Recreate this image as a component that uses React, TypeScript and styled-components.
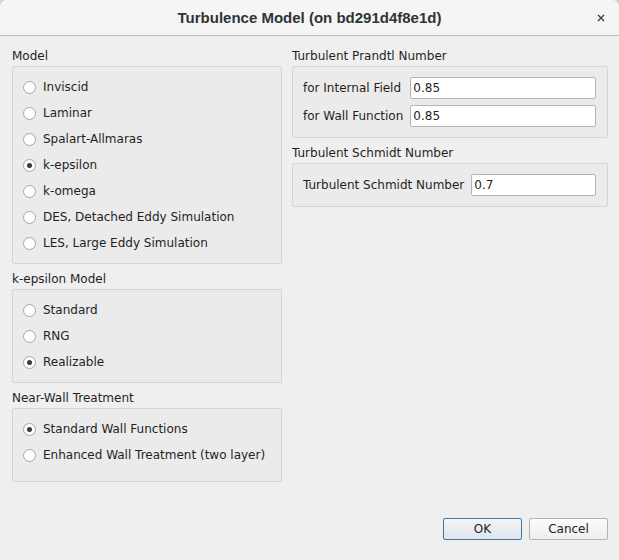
import React from "react";
import styled, { createGlobalStyle } from "styled-components";

const Global = createGlobalStyle`
  html, body { margin: 0; padding: 0; background: #d4d4d4; }
  body { font-family: "DejaVu Sans", sans-serif; font-size: 12px; color: #1f1f1f; }
  * { box-sizing: border-box; }
`;

const Window = styled.div`
  width: 619px;
  height: 560px;
  display: flex;
  flex-direction: column;
  background: #efefef;
  border-radius: 7px 7px 0 0;
  overflow: hidden;
`;

const TitleBar = styled.div`
  height: 36px;
  flex: none;
  display: flex;
  align-items: center;
  justify-content: center;
  position: relative;
  background: #f5f5f5;
  border-bottom: 1px solid #bcbcbc;
  font-family: "Liberation Sans", Arial, sans-serif;
  font-weight: 700;
  font-size: 15px;
  color: #2e3436;
`;

const CloseButton = styled.span`
  position: absolute;
  right: 13px;
  top: 13px;
  width: 10px;
  height: 10px;
  display: flex;
  align-items: center;
  justify-content: center;
`;

const Body = styled.div`
  flex: 1;
  display: flex;
  flex-direction: column;
  padding: 12px 11px 20px 12px;
`;

const Columns = styled.div`
  display: grid;
  grid-template-columns: 270px 316px;
  column-gap: 10px;
  align-items: start;
`;

const Column = styled.div`
  display: flex;
  flex-direction: column;
  gap: 7px;
`;

const Group = styled.div`
  display: flex;
  flex-direction: column;
`;

const GroupTitle = styled.div`
  height: 16px;
  line-height: 15px;
  padding-top: 1px;
  margin-bottom: 2px;
`;

const Box = styled.div<{ $extraBottom?: number }>`
  background: #ebebeb;
  border: 1px solid #d5d5d5;
  border-radius: 2px;
  padding: 7px 10px ${(p) => 7 + (p.$extraBottom ?? 0)}px 10px;
  display: flex;
  flex-direction: column;
`;

const FieldBox = styled.div`
  background: #ebebeb;
  border: 1px solid #d5d5d5;
  border-radius: 2px;
  padding: 10px 11px 10px 10px;
  display: grid;
  grid-template-columns: auto 1fr;
  column-gap: 7px;
  row-gap: 6px;
  align-items: center;
`;

const RadioRow = styled.label`
  height: 26px;
  display: flex;
  align-items: center;
  gap: 7px;
`;

const RadioCircle = styled.span<{ $checked?: boolean }>`
  width: 13px;
  height: 13px;
  flex: none;
  border-radius: 50%;
  border: 1px solid #a6a6a6;
  background: #ffffff;
  display: flex;
  align-items: center;
  justify-content: center;
  &::after {
    content: "";
    display: ${(p) => (p.$checked ? "block" : "none")};
    width: 5px;
    height: 5px;
    border-radius: 50%;
    background: #3a3a3a;
  }
`;

const FieldLabel = styled.span`
  white-space: nowrap;
`;

const Input = styled.div`
  height: 22px;
  background: #ffffff;
  border: 1px solid #b4b4b4;
  border-radius: 2px;
  padding: 0 2px;
  display: flex;
  align-items: center;
`;

const Footer = styled.div`
  margin-top: auto;
  display: flex;
  justify-content: flex-end;
  gap: 7px;
`;

const Button = styled.div<{ $default?: boolean }>`
  width: 79px;
  height: 22px;
  display: flex;
  align-items: center;
  justify-content: center;
  border-radius: 2px;
  border: 1px solid ${(p) => (p.$default ? "#3d78a8" : "#b3b3b3")};
  background: ${(p) =>
    p.$default
      ? "linear-gradient(#f3f4f6, #e0e4e9)"
      : "linear-gradient(#fbfbfb, #efefef)"};
  font-size: 12px;
  color: #1f1f1f;
`;

const Radio = ({ label, checked }: { label: string; checked?: boolean }) => (
  <RadioRow>
    <RadioCircle $checked={checked} />
    <span>{label}</span>
  </RadioRow>
);

export default function App() {
  return (
    <>
      <Global />
      <Window>
        <TitleBar>
          Turbulence Model (on bd291d4f8e1d)
          <CloseButton>
            <svg width="8" height="8" viewBox="0 0 8 8">
              <path d="M1 1L7 7M7 1L1 7" stroke="#3a3a3a" strokeWidth="1.3" />
            </svg>
          </CloseButton>
        </TitleBar>
        <Body>
          <Columns>
            <Column>
              <Group>
                <GroupTitle>Model</GroupTitle>
                <Box>
                  <Radio label="Inviscid" />
                  <Radio label="Laminar" />
                  <Radio label="Spalart-Allmaras" />
                  <Radio label="k-epsilon" checked />
                  <Radio label="k-omega" />
                  <Radio label="DES, Detached Eddy Simulation" />
                  <Radio label="LES, Large Eddy Simulation" />
                </Box>
              </Group>
              <Group>
                <GroupTitle>k-epsilon Model</GroupTitle>
                <Box>
                  <Radio label="Standard" />
                  <Radio label="RNG" />
                  <Radio label="Realizable" checked />
                </Box>
              </Group>
              <Group>
                <GroupTitle>Near-Wall Treatment</GroupTitle>
                <Box $extraBottom={6}>
                  <Radio label="Standard Wall Functions" checked />
                  <Radio label="Enhanced Wall Treatment (two layer)" />
                </Box>
              </Group>
            </Column>
            <Column>
              <Group>
                <GroupTitle>Turbulent Prandtl Number</GroupTitle>
                <FieldBox>
                  <FieldLabel>for Internal Field</FieldLabel>
                  <Input>0.85</Input>
                  <FieldLabel>for Wall Function</FieldLabel>
                  <Input>0.85</Input>
                </FieldBox>
              </Group>
              <Group>
                <GroupTitle>Turbulent Schmidt Number</GroupTitle>
                <FieldBox>
                  <FieldLabel>Turbulent Schmidt Number</FieldLabel>
                  <Input>0.7</Input>
                </FieldBox>
              </Group>
            </Column>
          </Columns>
          <Footer>
            <Button $default>OK</Button>
            <Button>Cancel</Button>
          </Footer>
        </Body>
      </Window>
    </>
  );
}
